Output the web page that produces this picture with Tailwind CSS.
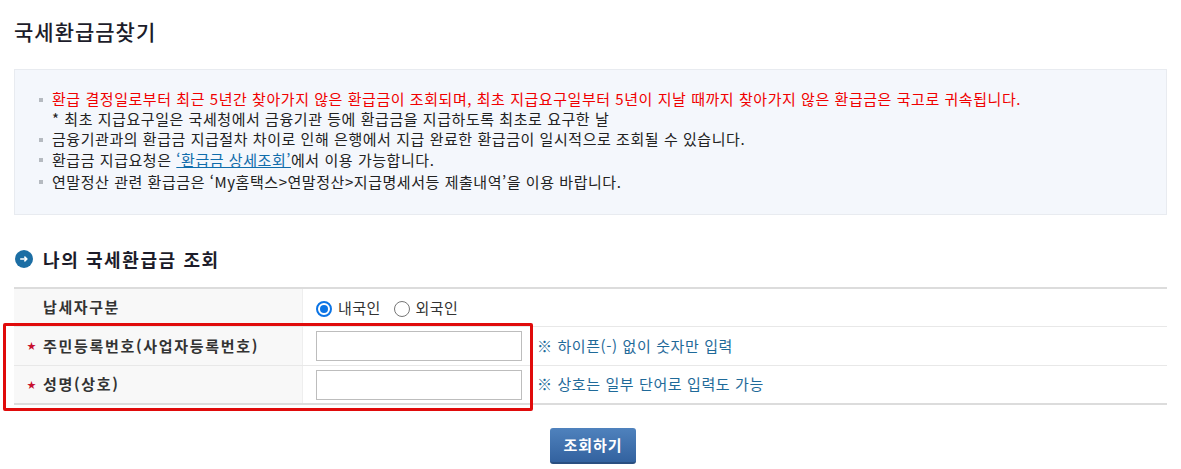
<!DOCTYPE html>
<html lang="ko">
<head>
    <meta charset="utf-8">
    <title>국세환급금찾기</title>
    <script src="https://cdn.jsdelivr.net/npm/@tailwindcss/browser@4"></script>
</head>
<body class="bg-white font-['Noto_Sans_CJK_KR',sans-serif] text-[#222]">
    <div class="relative w-[1181px] h-[469px] overflow-hidden px-[14px] pt-[18px]">
        <h1 class="text-[21px] leading-[26px] tracking-[1px] font-medium text-[#1c1c2a]">국세환급금찾기</h1>

        <!-- Notice -->
        <div class="mt-[25px] h-[146px] bg-[#f4f7fc] border border-[#e8ebf0] pl-[24px] pt-[20px] text-[15px] tracking-[0.55px] text-[#222]">
            <ul>
                <li class="flex items-center h-[19px] text-[#f00000]"><span class="w-[4px] h-[4px] bg-[#b5bac0] mr-[9px]"></span>환급 결정일로부터 최근 5년간 찾아가지 않은 환급금이 조회되며, 최초 지급요구일부터 5년이 지날 때까지 찾아가지 않은 환급금은 국고로 귀속됩니다.</li>
                <li class="pl-[13px] h-[19px] leading-[19px]">* 최초 지급요구일은 국세청에서 금융기관 등에 환급금을 지급하도록 최초로 요구한 날</li>
                <li class="flex items-center h-[21px] mt-[1px]"><span class="w-[4px] h-[4px] bg-[#b5bac0] mr-[9px]"></span>금융기관과의 환급금 지급절차 차이로 인해 은행에서 지급 완료한 환급금이 일시적으로 조회될 수 있습니다.</li>
                <li class="flex items-center h-[20px]"><span class="w-[4px] h-[4px] bg-[#b5bac0] mr-[9px]"></span>환급금 지급요청은&nbsp;<a href="#" class="text-[#0f6cab] underline">‘환급금 상세조회’</a>에서 이용 가능합니다.</li>
                <li class="flex items-center h-[22px] mt-[1px]"><span class="w-[4px] h-[4px] bg-[#b5bac0] mr-[9px]"></span>연말정산 관련 환급금은 ‘My홈택스&gt;연말정산&gt;지급명세서등 제출내역’을 이용 바랍니다.</li>
            </ul>
        </div>

        <!-- Section heading -->
        <div class="flex items-center mt-[32px] h-[24px]">
            <svg class="w-[18px] h-[18px] ml-[1px]" viewBox="0 0 18 18">
                <circle cx="9" cy="9" r="9" fill="#1c6ea4"/>
                <path d="M5.2 9h6.6M9.4 6.6 11.8 9l-2.4 2.4" fill="none" stroke="#fff" stroke-width="1.5"/>
            </svg>
            <h2 class="ml-[10px] text-[18px] font-semibold tracking-[1.6px] text-[#1c1c2a]">나의 국세환급금 조회</h2>
        </div>

        <!-- Form table -->
        <div class="mt-[16px] border-t-2 border-b-2 border-[#dcdcdc] text-[15px]">
            <div class="flex h-[38px] border-b border-[#e8e8e8]">
                <div class="w-[289px] bg-[#f8f8f8] border-r border-[#eee] pl-[29px] flex items-center font-semibold tracking-[1.6px] text-[#333]">납세자구분</div>
                <div class="flex items-center pl-[13px] pt-[2px] text-[#333] tracking-[0.4px]">
                    <span class="w-[16px] h-[16px] rounded-full border-2 border-[#0b74e5] flex items-center justify-center"><span class="w-[8px] h-[8px] rounded-full bg-[#0b74e5]"></span></span>
                    <span class="ml-[6px]">내국인</span>
                    <span class="ml-[13px] w-[16px] h-[16px] rounded-full border border-[#767676]"></span>
                    <span class="ml-[6px]">외국인</span>
                </div>
            </div>
            <div class="flex h-[39px] border-b border-[#e8e8e8]">
                <div class="w-[289px] bg-[#f8f8f8] border-r border-[#eee] flex items-center pl-[13px] font-semibold tracking-[1.7px] text-[#333]"><span class="w-[16px] text-[#c8102e] text-[9px]">★</span>주민등록번호(사업자등록번호)</div>
                <div class="flex items-center pl-[13px]">
                    <input type="text" class="w-[206px] h-[30px] border border-[#bdbdbd] bg-white">
                    <span class="ml-[15px] text-[#1f6a99] tracking-[0.6px]">※ 하이픈(-) 없이 숫자만 입력</span>
                </div>
            </div>
            <div class="flex h-[37px]">
                <div class="w-[289px] bg-[#f8f8f8] border-r border-[#eee] flex items-center pl-[13px] font-semibold tracking-[1.7px] text-[#333]"><span class="w-[16px] text-[#c8102e] text-[9px]">★</span>성명(상호)</div>
                <div class="flex items-center pl-[13px]">
                    <input type="text" class="w-[206px] h-[30px] border border-[#bdbdbd] bg-white">
                    <span class="ml-[15px] text-[#1f6a99] tracking-[0.6px]">※ 상호는 일부 단어로 입력도 가능</span>
                </div>
            </div>
        </div>

        <div class="flex justify-center mt-[23px] pl-[5px]">
            <button class="w-[86px] h-[36px] rounded-[3px] bg-gradient-to-b from-[#4f82bd] to-[#33629f] border-b-2 border-[#2a4f80] text-white text-[15px] tracking-[1px] font-semibold">조회하기</button>
        </div>

        <!-- Red highlight over the form -->
        <div class="absolute left-[3px] top-[323px] w-[530px] h-[88px] border-[3px] border-[#e00b0b] rounded-[2px]"></div>
    </div>
</body>
</html>
